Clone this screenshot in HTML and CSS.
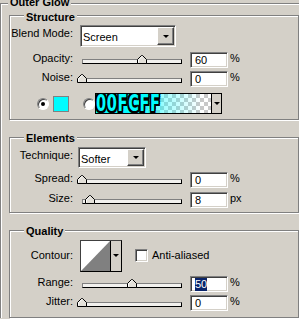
FILE: index.html
```html
<!DOCTYPE html>
<html lang="en">
<head>
    <meta charset="UTF-8">
    <title>Outer Glow</title>
    <link rel="stylesheet" href="styles.css">
</head>
<body>
    <div class="group outer">
        <div class="group-title outer-title">Outer Glow</div>

        <div class="group sub structure">
            <div class="group-title">Structure</div>
            <div class="row blend">
                <span class="lbl">Blend Mode:</span>
                <div class="select select-blend"><span class="val">Screen</span><span class="drop"><i class="arrow"></i></span></div>
            </div>
            <div class="row field first">
                <span class="lbl">Opacity:</span>
                <div class="slider"><div class="track"></div><svg class="thumb" style="left:60px" width="10" height="9" viewBox="0 0 10 9"><path d="M0.5 8.5V4.5L4.5 0.5H5.5L9.5 4.5V8.5Z" fill="#e4e1da" stroke="#000"/><path d="M1.5 7.5V4.9L4.9 1.5" fill="none" stroke="#fff"/></svg></div>
                <div class="num">60</div><span class="unit">%</span>
            </div>
            <div class="row field next">
                <span class="lbl">Noise:</span>
                <div class="slider"><div class="track"></div><svg class="thumb" style="left:0px" width="10" height="9" viewBox="0 0 10 9"><path d="M0.5 8.5V4.5L4.5 0.5H5.5L9.5 4.5V8.5Z" fill="#e4e1da" stroke="#000"/><path d="M1.5 7.5V4.9L4.9 1.5" fill="none" stroke="#fff"/></svg></div>
                <div class="num">0</div><span class="unit">%</span>
            </div>
            <div class="row colors">
                <span class="radio checked"></span>
                <span class="swatch"></span>
                <span class="radio radio-grad"></span>
                <div class="gradient">
                    <span class="hex">00FCFF</span>
                    <span class="grad-drop"><i class="arrow"></i></span>
                </div>
            </div>
        </div>

        <div class="group sub elements">
            <div class="group-title">Elements</div>
            <div class="row blend">
                <span class="lbl">Technique:</span>
                <div class="select select-tech"><span class="val">Softer</span><span class="drop"><i class="arrow"></i></span></div>
            </div>
            <div class="row field spread">
                <span class="lbl">Spread:</span>
                <div class="slider"><div class="track"></div><svg class="thumb" style="left:0px" width="10" height="9" viewBox="0 0 10 9"><path d="M0.5 8.5V4.5L4.5 0.5H5.5L9.5 4.5V8.5Z" fill="#e4e1da" stroke="#000"/><path d="M1.5 7.5V4.9L4.9 1.5" fill="none" stroke="#fff"/></svg></div>
                <div class="num">0</div><span class="unit">%</span>
            </div>
            <div class="row field spread">
                <span class="lbl">Size:</span>
                <div class="slider"><div class="track"></div><svg class="thumb" style="left:8px" width="10" height="9" viewBox="0 0 10 9"><path d="M0.5 8.5V4.5L4.5 0.5H5.5L9.5 4.5V8.5Z" fill="#e4e1da" stroke="#000"/><path d="M1.5 7.5V4.9L4.9 1.5" fill="none" stroke="#fff"/></svg></div>
                <div class="num">8</div><span class="unit">px</span>
            </div>
        </div>

        <div class="group sub quality">
            <div class="group-title">Quality</div>
            <div class="row contour-row">
                <span class="lbl">Contour:</span>
                <div class="contour">
                    <svg class="curve" width="29" height="30" viewBox="0 0 29 30"><rect width="29" height="30" fill="#fff"/><path d="M0 30L29 0V30Z" fill="#808080"/></svg>
                    <span class="contour-drop"><i class="arrow"></i></span>
                </div>
                <span class="check"></span>
                <span class="check-lbl">Anti-aliased</span>
            </div>
            <div class="row field range">
                <span class="lbl">Range:</span>
                <div class="slider"><div class="track"></div><svg class="thumb" style="left:50px" width="10" height="9" viewBox="0 0 10 9"><path d="M0.5 8.5V4.5L4.5 0.5H5.5L9.5 4.5V8.5Z" fill="#e4e1da" stroke="#000"/><path d="M1.5 7.5V4.9L4.9 1.5" fill="none" stroke="#fff"/></svg></div>
                <div class="num"><span class="sel">50</span></div><span class="unit">%</span>
            </div>
            <div class="row field next">
                <span class="lbl">Jitter:</span>
                <div class="slider"><div class="track"></div><svg class="thumb" style="left:0px" width="10" height="9" viewBox="0 0 10 9"><path d="M0.5 8.5V4.5L4.5 0.5H5.5L9.5 4.5V8.5Z" fill="#e4e1da" stroke="#000"/><path d="M1.5 7.5V4.9L4.9 1.5" fill="none" stroke="#fff"/></svg></div>
                <div class="num">0</div><span class="unit">%</span>
            </div>
        </div>
    </div>
</body>
</html>
```

FILE: styles.css
```css
html, body { margin: 0; }
body { background: #d4d0c8; font: 11px "Liberation Sans", Arial, sans-serif; color: #000; width: 299px; height: 319px; overflow: hidden; }

/* etched group boxes */
.group { border: 1px solid #808080; box-shadow: inset 1px 1px #fff, 1px 1px #fff; }
.group-title { display: table; line-height: 13px; font-weight: bold; background: #d4d0c8; padding: 0 2px; margin: -5px 0 0 13px; }
.outer { margin-top: 3px; width: 290px; border-right: 0; border-bottom: 0; padding-left: 8px; box-shadow: inset 1px 1px #fff; }
.outer-title { margin: -8px 0 0 -1px; }
.sub { width: 287px; padding: 0 0 0 1px; }
.structure { margin-top: 6px; padding-bottom: 5px; }
.elements { margin-top: 17px; padding-bottom: 4px; }
.quality { margin-top: 17px; padding-bottom: 6px; }
.elements .group-title, .quality .group-title { margin-top: -6px; }

.row { display: flex; align-items: flex-start; }
.lbl { width: 62px; flex: none; text-align: right; line-height: 13px; white-space: nowrap; }
.blend { margin-top: 1px; }
.elements .blend { margin-top: 2px; }
.blend .lbl { padding-top: 2px; }
.first { margin-top: 5px; }
.next { margin-top: 3px; }
.spread, .range { margin-top: 4px; }

/* drop-down lists */
.select { display: flex; box-sizing: border-box; height: 22px; padding: 1px; background: #fff; border: 1px solid; border-color: #808080 #fff #fff #808080; box-shadow: inset 1px 1px #404040, inset -1px -1px #d4d0c8; }
.select-blend { width: 96px; margin-left: 7px; }
.select-tech { width: 68px; height: 21px; margin-left: 5px; }
.select .val { flex: 1; padding: 2px 0 0 1px; line-height: 16px; }
.drop, .grad-drop, .contour-drop { display: flex; align-items: center; justify-content: center; background: #d4d0c8; }
.drop { width: 17px; box-sizing: border-box; border: 1px solid; border-color: #fff #404040 #404040 #fff; box-shadow: inset -1px -1px #808080; }
.arrow { width: 0; height: 0; border-left: 3px solid transparent; border-right: 3px solid transparent; border-top: 3px solid #000; }

/* sliders and numeric fields */
.slider { position: relative; width: 110px; height: 16px; margin-left: 4px; flex: none; }
.track { box-sizing: border-box; height: 5px; margin: 7px 5px 0; background: #f2f1ee; border: 1px solid #000; border-top-color: #808080; border-left-color: #808080; }
.thumb { position: absolute; top: 3px; }
.num { box-sizing: border-box; width: 38px; height: 16px; margin-left: 3px; padding: 1px 0 0 4px; line-height: 12px; background: #fff; border: 1px solid; border-color: #808080 #fff #fff #808080; box-shadow: inset 1px 1px #404040, inset -1px -1px #d4d0c8; }
.unit { margin-left: 2px; line-height: 12px; }
.sel { background: #0a246a; color: #fff; display: inline-block; line-height: 13px; margin-top: -1px; }

/* colour choice */
.colors { margin-top: 6px; height: 21px; align-items: center; }
.radio { position: relative; box-sizing: border-box; width: 12px; height: 12px; border-radius: 50%; background: #fff; border: 1px solid; border-color: #808080 #fff #fff #808080; box-shadow: inset 1px 1px #404040; margin-left: 26px; }
.checked::after { content: ""; position: absolute; left: 3px; top: 3px; width: 4px; height: 4px; border-radius: 50%; background: #000; }
.swatch { box-sizing: border-box; width: 16px; height: 16px; margin-left: 4px; background: #00fcff; border: 1px solid #808080; }
.radio-grad { margin-left: 14px; }
.gradient { position: relative; display: flex; justify-content: flex-end; box-sizing: border-box; width: 127px; height: 21px; border: 1px solid #000; overflow: hidden;
    background:
        linear-gradient(to right, #00fcff 0%, #00fcff 35%, rgba(0, 252, 255, 0.35) 55%, rgba(0, 252, 255, 0) 85%),
        repeating-conic-gradient(#c8c8c8 0 25%, #fff 0 50%) 0 0 / 8px 8px; }
.hex { position: absolute; left: 0; top: -4px; font: bold 23px "DejaVu Sans Condensed", "DejaVu Sans", sans-serif; line-height: 26px; color: #00fcff; transform: scaleX(0.7); transform-origin: left top; letter-spacing: 1px;
    text-shadow: 2px 0 #000, -2px 0 #000, 0 2px #000, 0 -2px #000, 1px 1px #000, -1px -1px #000, 1px -1px #000, -1px 1px #000, 2px 2px #000, -2px 2px #000, 2px -2px #000, -2px -2px #000; }
.grad-drop { width: 9px; border-left: 1px solid #000; }

/* contour */
.contour-row { margin-top: 1px; height: 33px; align-items: center; }
.contour { display: flex; box-sizing: border-box; width: 42px; height: 32px; margin-left: 7px; border: 1px solid #000; border-top-color: #404040; border-left-color: #404040; background: #fff; }
.curve { display: block; }
.contour-drop { flex: 1; border-left: 1px solid #000; }
.check { box-sizing: border-box; width: 13px; height: 13px; margin-left: 13px; background: #fff; border: 1px solid; border-color: #808080 #fff #fff #808080; box-shadow: inset 1px 1px #404040, inset -1px -1px #d4d0c8; }
.check-lbl { margin-left: 4px; line-height: 13px; }
```
